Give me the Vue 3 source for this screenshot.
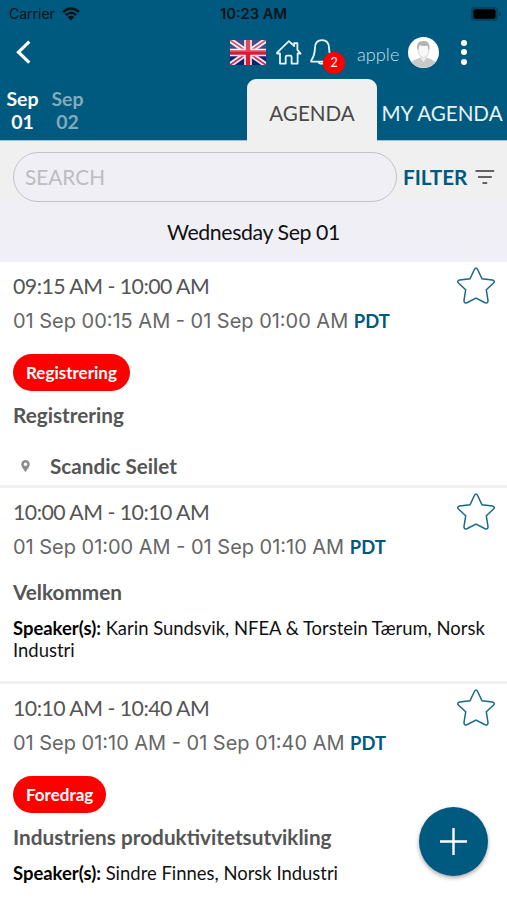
<script setup>
import { ref } from 'vue'

const days = [
  { id: 1, month: 'Sep', day: '01' },
  { id: 2, month: 'Sep', day: '02' },
]
const selectedDay = ref(1)
const tab = ref('agenda')
const search = ref('')

const sessions = ref([
  {
    id: 1,
    time: '09:15 AM - 10:00 AM',
    local: '01 Sep 00:15 AM - 01 Sep 01:00 AM',
    tag: 'Registrering',
    title: 'Registrering',
    location: 'Scandic Seilet',
    starred: false,
  },
  {
    id: 2,
    time: '10:00 AM - 10:10 AM',
    local: '01 Sep 01:00 AM - 01 Sep 01:10 AM',
    title: 'Velkommen',
    speakers: 'Karin Sundsvik, NFEA & Torstein Tærum, Norsk Industri',
    starred: false,
  },
  {
    id: 3,
    time: '10:10 AM - 10:40 AM',
    local: '01 Sep 01:10 AM - 01 Sep 01:40 AM',
    tag: 'Foredrag',
    title: 'Industriens produktivitetsutvikling',
    speakers: 'Sindre Finnes, Norsk Industri',
    starred: false,
  },
])
</script>

<template>
  <div class="app">
    <header class="header">
      <div class="status">
        <div class="carrier">
          <span>Carrier</span>
          <svg class="wifi" viewBox="0 0 18 14">
            <path d="M1 5 Q9 -2 17 5" />
            <path d="M3.8 8 Q9 3.4 14.2 8" />
            <path class="dot" d="M5.8 10 Q9 7.4 12.2 10 L9 13.4 Z" />
          </svg>
        </div>
        <span class="clock">10:23 AM</span>
        <svg class="battery" width="30" height="14" viewBox="0 0 30 14">
          <rect width="27" height="14" rx="4" fill="#06445f" />
          <rect x="28" y="5" width="1.6" height="4" rx=".8" fill="#06445f" />
          <rect x="2.5" y="2.3" width="22" height="9.4" rx="2" fill="#000" />
        </svg>
      </div>

      <nav class="nav">
        <button class="back">
          <svg width="16" height="24" viewBox="0 0 16 24">
            <path d="M13.3 1.7 L2.5 12.2 L13.3 22.6" />
          </svg>
        </button>
        <svg class="flag" width="36" height="25" viewBox="0 0 36 25">
          <rect width="36" height="25" fill="#14206f" />
          <path d="M0 0 L36 25 M36 0 L0 25" stroke="#e9edf5" stroke-width="5.2" />
          <path d="M0 0 L36 25 M36 0 L0 25" stroke="#d6263e" stroke-width="1.7" />
          <path d="M18 0 V25 M0 12.5 H36" stroke="#f3f3f8" stroke-width="7.6" />
          <path d="M18 0 V25 M0 12.5 H36" stroke="#dc1935" stroke-width="4.4" />
          <rect width="36" height="12" fill="#fff" opacity=".2" />
        </svg>
        <svg class="home" width="26" height="25" viewBox="0 0 26 25">
          <path d="M4 13.5 V23.6 H9.7 V17 Q9.7 15.6 11.1 15.6 H14.2 Q15.6 15.6 15.6 17 V23.6 H21.6 V13.5 H24.6 L21.4 9.8 V3.2 H18.2 V6 L12.9 1.2 L1.1 12.6 V13.5 Z" />
        </svg>
        <div class="bell">
          <svg width="24" height="26" viewBox="0 0 24 26">
            <path d="M12 1.2 C7.7 1.2 5.2 4.3 5 8.6 C4.8 14 4.2 17.4 1.2 21.5 V22.6 H22.8 V21.5 C19.8 17.4 19.2 14 19 8.6 C18.8 4.3 16.3 1.2 12 1.2 Z" />
            <path d="M8.5 22.6 C9 25.4 15 25.4 15.5 22.6" />
          </svg>
          <span class="count">2</span>
        </div>
        <span class="user">apple</span>
        <svg class="avatar" width="31" height="31" viewBox="0 0 31 31">
          <circle cx="15.5" cy="15.5" r="15.5" fill="#fff" />
          <path d="M3.7 25.3 Q5 22.7 12.4 20.7 V17 H18.7 V20.7 Q26 22.7 27.4 25.3 A15.4 15.4 0 0 1 3.7 25.3 Z" fill="#c9c9c9" />
          <path d="M12.4 20.5 L15.5 25 L18.7 20.5 V17 H12.4 Z" fill="#f1f1f1" />
          <path d="M10 8 Q15.5 3 21 8 L20.8 14.5 Q19.4 20.2 15.5 20.6 Q11.6 20.2 10.2 14.5 Z" fill="#f8f8f8" stroke="#cfcfcf" stroke-width=".8" />
          <path d="M9.4 12.5 Q8 4 14 4.2 Q22.4 2.7 21.5 12.5 L20.3 12.5 L19.7 8.7 Q13.6 9.4 11.7 8 L10.5 12.5 Z" fill="#b4b4b4" />
        </svg>
        <button class="more"><i></i><i></i><i></i></button>
      </nav>

      <div class="tabs">
        <div class="days">
          <button
            v-for="d in days"
            :key="d.id"
            class="day"
            :class="{ active: selectedDay === d.id }"
            @click="selectedDay = d.id"
          >
            <span>{{ d.month }}</span>
            <span>{{ d.day }}</span>
          </button>
        </div>
        <button class="tab" :class="{ active: tab === 'agenda' }" @click="tab = 'agenda'">AGENDA</button>
        <button class="tab" :class="{ active: tab === 'mine' }" @click="tab = 'mine'">MY AGENDA</button>
      </div>
    </header>

    <div class="searchbar">
      <input v-model="search" class="search" type="text" placeholder="SEARCH" />
      <button class="filter">
        <span>FILTER</span>
        <svg width="20" height="16" viewBox="0 0 20 16">
          <path d="M0.5 2 H19.2 M3 8 H16.8 M7.5 14 H12.2" />
        </svg>
      </button>
    </div>
    <div class="date">Wednesday Sep 01</div>

    <main>
      <article v-for="s in sessions" :key="s.id" class="session">
        <div class="top">
          <div>
            <div class="time">{{ s.time }}</div>
            <div class="local">{{ s.local }} <b>PDT</b></div>
          </div>
          <button class="star" :class="{ on: s.starred }" @click="s.starred = !s.starred">
            <svg width="38" height="38" viewBox="0 0 38 38">
              <path d="M17.5 2.3 Q19 -0.3 20.5 2.3 L25 11.7 L35.4 13 Q38.6 13.7 36.3 16.2 L29.3 22.8 L31 33.5 Q31.1 36.8 28.1 35.7 L19 31.2 L9.9 35.7 Q6.9 36.8 7 33.5 L8.7 22.8 L1.7 16.2 Q-0.6 13.7 2.6 13 L13 11.7 Z" />
            </svg>
          </button>
        </div>
        <span v-if="s.tag" class="tag">{{ s.tag }}</span>
        <h2 class="title">{{ s.title }}</h2>
        <p v-if="s.speakers" class="speakers"><b>Speaker(s):</b> {{ s.speakers }}</p>
        <div v-if="s.location" class="location">
          <svg width="9" height="12" viewBox="0 0 9 12">
            <path fill-rule="evenodd" d="M4.5 0 A4.3 4.3 0 0 0 0.2 4.3 C0.2 7 4.5 12 4.5 12 S8.8 7 8.8 4.3 A4.3 4.3 0 0 0 4.5 0 Z M4.5 2.5 A1.8 1.8 0 1 1 4.5 6.1 A1.8 1.8 0 1 1 4.5 2.5 Z" />
          </svg>
          <span>{{ s.location }}</span>
        </div>
      </article>
    </main>

    <button class="add">
      <svg width="27" height="27" viewBox="0 0 27 27">
        <path d="M13.5 0 V27 M0 13.5 H27" />
      </svg>
    </button>
  </div>
</template>

<style>
body {
  margin: 0;
  overflow: hidden;
}
</style>

<style scoped>
.app {
  width: 507px;
  height: 900px;
  overflow: hidden;
  position: relative;
  background-color: #fff;
  font-family: Lato, sans-serif;
  color: #555;
}

button {
  border: 0;
  padding: 0;
  background: none;
  font-family: inherit;
  color: inherit;
  cursor: pointer;
}

svg {
  display: block;
  flex-shrink: 0;
}

.header {
  background-color: #00597e;
}

.status {
  height: 27px;
  padding: 0 6px 0 9px;
  display: grid;
  grid-template-columns: 1fr auto 1fr;
  align-items: center;
  font-family: Inter, sans-serif;
  font-size: 14px;
  color: #06141b;
}

.carrier {
  display: flex;
  gap: 7px;
  align-items: center;
}

.wifi {
  width: 18px;
  height: 14px;
  fill: none;
  stroke: #06141b;
  stroke-width: 2.4;
}

.wifi .dot {
  fill: #06141b;
  stroke: none;
}

.clock {
  margin-right: 3px;
  font-size: 14.7px;
  font-weight: 600;
}

.battery {
  justify-self: end;
}

.nav {
  height: 52px;
  padding-bottom: 2px;
  box-sizing: border-box;
  display: flex;
  align-items: center;
}

.back {
  margin: 0 198px 0 16px;
}

.back path {
  fill: none;
  stroke: #fff;
  stroke-width: 3.2;
}

.home {
  margin-left: 10px;
}

.home path,
.bell path {
  fill: none;
  stroke: #e8f6fb;
  stroke-width: 1.8;
  stroke-linejoin: round;
}

.bell {
  position: relative;
  margin-left: 8px;
}

.count {
  position: absolute;
  left: 13px;
  top: 13px;
  width: 22px;
  height: 22px;
  line-height: 22px;
  border-radius: 50%;
  background-color: #f00;
  color: #fff;
  font-size: 12.5px;
  text-align: center;
}

.user {
  width: 51px;
  margin: 3px 0 0 23px;
  font-size: 18.2px;
  font-weight: 300;
  color: #c3e0ec;
}

.more {
  margin-left: 22px;
  display: flex;
  flex-direction: column;
  gap: 3.5px;
}

.more i {
  width: 6px;
  height: 6px;
  border-radius: 50%;
  background-color: #fff;
}

.tabs {
  height: 62px;
  display: flex;
}

.days {
  flex: 1;
  display: flex;
  padding-top: 8px;
  border-bottom: 1px solid #9cc2d3;
}

.day {
  width: 45px;
  height: 46px;
  display: flex;
  flex-direction: column;
  line-height: 23px;
  font-size: 19.5px;
  font-weight: 700;
  align-items: center;
  color: #80acbf;
}

.day.active {
  color: #fff;
}

.tab {
  width: 130px;
  padding-top: 7px;
  border-bottom: 1px solid #9cc2d3;
  font-size: 20.6px;
  color: #e8f3f7;
}

.tab.active {
  border-color: #f0f0f0;
  border-radius: 9px 9px 0 0;
  background-color: #f0f0f0;
  color: #484848;
}

.searchbar {
  height: 66px;
  padding: 11px 12px 0 13px;
  box-sizing: border-box;
  display: flex;
  align-items: flex-start;
  background: linear-gradient(#f0f0f0 59px, #f0eff5 59px);
}

.search {
  width: 384px;
  height: 50px;
  box-sizing: border-box;
  padding: 0 11px 2px;
  border: 1px solid #c3c2c7;
  border-radius: 25px;
  background-color: #f0eff5;
  font-family: inherit;
  font-size: 20.8px;
  outline: 0;
}

.search::placeholder {
  color: #bdbcc2;
  opacity: 1;
}

.filter {
  flex: 1;
  height: 50px;
  margin-left: 6px;
  display: flex;
  justify-content: space-between;
  align-items: center;
  font-size: 20.7px;
  font-weight: 700;
  color: #00597e;
}

.filter path {
  fill: none;
  stroke: #636363;
  stroke-width: 2.2;
}

.date {
  height: 55px;
  line-height: 50px;
  background-color: #f0eff5;
  text-align: center;
  font-size: 21.3px;
  letter-spacing: -0.4px;
  color: #111;
}

.session {
  padding: 6px 12px 0 13px;
  border-bottom: 3px solid #f0f0f0;
}

.session:last-child {
  border-bottom: 0;
}

.top {
  height: 70px;
  display: flex;
  justify-content: space-between;
}

.time {
  line-height: 36px;
  font-size: 21.3px;
  letter-spacing: -0.52px;
}

.local {
  line-height: 34px;
  font-family: Inter, sans-serif;
  font-size: 19.97px;
  color: #666;
  white-space: nowrap;
}

.local b {
  font-family: Lato, sans-serif;
  font-size: 18.4px;
  font-weight: 700;
  color: #00597e;
}

.star {
  height: 38px;
  margin-top: -1px;
}

.star path {
  fill: none;
  stroke: #16688c;
  stroke-width: 1.5;
}

.star.on path {
  fill: #16688c;
}

.tag {
  display: block;
  width: fit-content;
  height: 37px;
  line-height: 37px;
  margin: 16px 0 11px;
  padding: 0 13px;
  border-radius: 19px;
  background-color: #f00;
  color: #fff;
  font-size: 17px;
  font-weight: 700;
}

.title {
  margin: 15px 0 0;
  height: 28px;
  line-height: 26px;
  font-size: 20.75px;
  font-weight: 700;
}

.tag + .title {
  margin-top: 0;
}

.speakers {
  margin: 10px 0 20px;
  line-height: 22px;
  font-size: 18.45px;
  color: #111;
}

.speakers b {
  color: #000;
}

.location {
  margin: 22px 0 5px 8px;
  height: 28px;
  display: flex;
  align-items: center;
  gap: 20px;
  line-height: 26px;
  font-size: 20.7px;
  font-weight: 700;
}

.location path {
  fill: #8c8c8c;
}

.add {
  position: absolute;
  right: 19px;
  bottom: 24px;
  width: 69px;
  height: 69px;
  display: flex;
  align-items: center;
  justify-content: center;
  border-radius: 50%;
  background-color: #00597e;
  box-shadow: 0 2px 4px rgba(0, 0, 0, 0.35);
}

.add path {
  stroke: #fff;
  stroke-width: 2.4;
}
</style>
